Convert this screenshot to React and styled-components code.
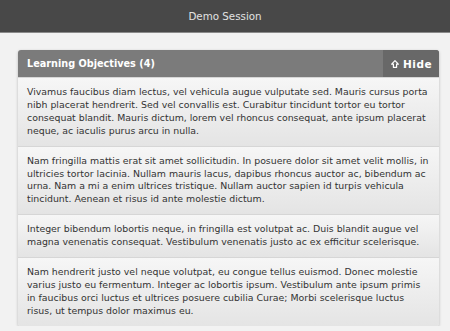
import React from 'react';
import styled, { createGlobalStyle } from 'styled-components';

const objectives = [
    'Vivamus faucibus diam lectus, vel vehicula augue vulputate sed. Mauris cursus porta nibh placerat hendrerit. Sed vel convallis est. Curabitur tincidunt tortor eu tortor consequat blandit. Mauris dictum, lorem vel rhoncus consequat, ante ipsum placerat neque, ac iaculis purus arcu in nulla.',
    'Nam fringilla mattis erat sit amet sollicitudin. In posuere dolor sit amet velit mollis, in ultricies tortor lacinia. Nullam mauris lacus, dapibus rhoncus auctor ac, bibendum ac urna. Nam a mi a enim ultrices tristique. Nullam auctor sapien id turpis vehicula tincidunt. Aenean et risus id ante molestie dictum.',
    'Integer bibendum lobortis neque, in fringilla est volutpat ac. Duis blandit augue vel magna venenatis consequat. Vestibulum venenatis justo ac ex efficitur scelerisque.',
    'Nam hendrerit justo vel neque volutpat, eu congue tellus euismod. Donec molestie varius justo eu fermentum. Integer ac lobortis ipsum. Vestibulum ante ipsum primis in faucibus orci luctus et ultrices posuere cubilia Curae; Morbi scelerisque luctus risus, ut tempus dolor maximus eu.',
];

const App = () => {
    return (
        <>
            <GlobalStyle />
            <TopBar>Demo Session</TopBar>
            <Page>
                <Card>
                    <CardHeader>
                        <Title>Learning Objectives ({objectives.length})</Title>
                        <HideButton>
                            <svg width="8" height="8" viewBox="0 0 12 12">
                                <path d="M6 1 L11 6.3 H8.4 V11 H3.6 V6.3 H1 Z" fill="none" stroke="#fff" strokeWidth="1.8" strokeLinejoin="round" />
                            </svg>
                            Hide
                        </HideButton>
                    </CardHeader>
                    {objectives.map((text, i) => (
                        <Item key={i}>{text}</Item>
                    ))}
                </Card>
            </Page>
        </>
    );
};

export default App;

const GlobalStyle = createGlobalStyle`
body {
    margin: 0;
    background: #f2f2f2;
    font-family: "DejaVu Sans", Verdana, sans-serif;
}
`
const TopBar = styled.div`
height: 32px;
background: #484848;
border-bottom: 1px solid #8a8a8a;
color: #e2e2e2;
font-size: 10.3px;
display: flex;
align-items: center;
justify-content: center;
`
const Page = styled.div`
padding: 17px 11px 0 18px;
`
const Card = styled.div`
background: #f0f0f0;
border-radius: 3px 3px 2px 2px;
box-shadow: 0 1px 3px rgba(0, 0, 0, 0.25);
overflow: hidden;
`
const CardHeader = styled.div`
height: 27px;
display: flex;
align-items: stretch;
background: #7b7b7b;
color: #fff;
font-weight: bold;
font-size: 9.7px;
`
const Title = styled.div`
flex: 1;
display: flex;
align-items: center;
padding-left: 9px;
`
const HideButton = styled.div`
display: flex;
align-items: center;
gap: 4px;
width: 56px;
box-sizing: border-box;
padding-left: 8px;
background: #686868;
font-size: 10.5px;
letter-spacing: 0.5px;
cursor: pointer;
`
const Item = styled.div`
padding: 8px 10px 8px 9px;
font-size: 9.4px;
line-height: 12.9px;
color: #333;
background: linear-gradient(#f6f6f6, #e4e4e4);
border-top: 1px solid #d6d6d6;
&:first-of-type {
    border-top: none;
}
`
